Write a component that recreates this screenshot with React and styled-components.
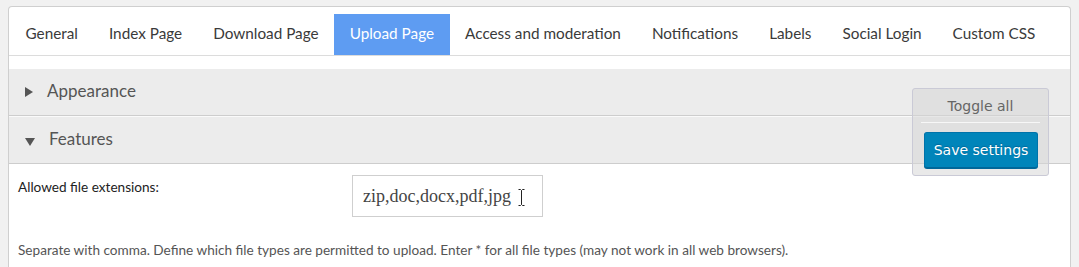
import React from "react";
import styled, { createGlobalStyle } from "styled-components";

const GlobalStyle = createGlobalStyle`
  body {
    margin: 0;
    background: #f1f1f1;
    font-family: Lato, "Open Sans", sans-serif;
  }
`;

const Page = styled.div`
  padding: 6px 8px 0 8px;
  height: 261px;
  overflow: hidden;
`;

const Panel = styled.div`
  position: relative;
  background: #fff;
  border: 1px solid #cfcfcf;
  border-bottom: none;
  border-radius: 4px 4px 0 0;
  height: 100%;
  box-sizing: border-box;
`;

const Tabs = styled.nav`
  display: flex;
  padding: 7px 0 0 1px;
  border-bottom: 1px solid #dcdcdc;
`;

const Tab = styled.div`
  height: 41px;
  box-sizing: border-box;
  display: flex;
  align-items: center;
  padding: 0 15.5px 4px 15.5px;
  font-size: 15.3px;
  color: ${(p) => (p.active ? "#fff" : "#3a3a3a")};
  background: ${(p) => (p.active ? "#5e9cf2" : "transparent")};
  white-space: nowrap;
`;

const Sections = styled.div`
  margin-top: 13px;
`;

const SectionHead = styled.div`
  display: flex;
  align-items: center;
  height: 43px;
  padding: 0 0 3px 16px;
  gap: 14px;
  background: #ececec;
  border-bottom: 1px solid #cdcdcd;
  border-top: ${(p) => (p.first ? "none" : "1px solid #fafafa")};
  font-size: 17px;
  color: #555;
`;

const Arrow = styled.span`
  width: 0;
  height: 0;
  ${(p) =>
    p.open
      ? `border-left: 5px solid transparent;
         border-right: 5px solid transparent;
         border-top: 8px solid #555;
         margin-top: 6px;`
      : `border-top: 5px solid transparent;
         border-bottom: 5px solid transparent;
         border-left: 8px solid #555;
         margin-top: 2px;`}
`;

const Content = styled.div`
  padding: 11px 9px 0 9px;
`;

const Row = styled.div`
  display: flex;
  align-items: flex-start;
`;

const Label = styled.div`
  width: 334px;
  font-size: 13.6px;
  color: #222;
  margin-top: 4px;
`;

const InputWrap = styled.div`
  position: relative;
`;

const TextInput = styled.input`
  width: 191px;
  height: 42px;
  box-sizing: border-box;
  border: 1px solid #cfcfcf;
  padding: 0 10px;
  font-family: "Liberation Serif", "Times New Roman", serif;
  font-size: 18px;
  color: #444;
  background: #fff;
  outline: none;
`;

const Cursor = styled.svg`
  position: absolute;
  left: 166px;
  top: 14px;
`;

const Help = styled.p`
  margin: 25px 0 0 0;
  font-size: 13.6px;
  color: #555;
`;

const ToggleBox = styled.div`
  position: absolute;
  top: 81px;
  right: 21px;
  width: 137px;
  box-sizing: border-box;
  padding: 0 8px 7px 8px;
  background: rgba(215, 215, 215, 0.55);
  border: 1px solid #cacad6;
  border-radius: 3px;
`;

const ToggleTitle = styled.div`
  height: 33px;
  display: flex;
  align-items: center;
  justify-content: center;
  font-family: "DejaVu Sans", Verdana, sans-serif;
  font-size: 14px;
  color: #666;
  border-bottom: 1px solid #f7f7f7;
`;

const SaveButton = styled.button`
  display: block;
  width: 114px;
  height: 36px;
  margin: 9px 0 0 3px;
  padding: 0;
  background: #0085ba;
  border: 1px solid #0073aa;
  border-bottom-color: #006799;
  border-radius: 3px;
  box-shadow: 0 1px 0 #006799;
  color: #fff;
  font-family: "DejaVu Sans", Verdana, sans-serif;
  font-size: 14px;
  text-shadow: 0 -1px 1px #006799;
`;

const tabs = [
  "General",
  "Index Page",
  "Download Page",
  "Upload Page",
  "Access and moderation",
  "Notifications",
  "Labels",
  "Social Login",
  "Custom CSS",
];

export default function App() {
  return (
    <>
      <GlobalStyle />
      <Page>
        <Panel>
          <Tabs>
            {tabs.map((t) => (
              <Tab key={t} active={t === "Upload Page"}>
                {t}
              </Tab>
            ))}
          </Tabs>
          <Sections>
            <SectionHead first>
              <Arrow />
              Appearance
            </SectionHead>
            <SectionHead>
              <Arrow open />
              Features
            </SectionHead>
          </Sections>
          <Content>
            <Row>
              <Label>Allowed file extensions:</Label>
              <InputWrap>
                <TextInput readOnly value="zip,doc,docx,pdf,jpg" />
                <Cursor width="7" height="17" viewBox="0 0 7 17">
                  <path
                    d="M0.5 0.5 H2.5 L3.5 1.5 L4.5 0.5 H6.5 M3.5 1.5 V15.5 M0.5 16.5 H2.5 L3.5 15.5 L4.5 16.5 H6.5"
                    stroke="#222"
                    strokeWidth="1"
                    fill="none"
                  />
                </Cursor>
              </InputWrap>
            </Row>
            <Help>
              Separate with comma. Define which file types are permitted to
              upload. Enter * for all file types (may not work in all web
              browsers).
            </Help>
          </Content>
          <ToggleBox>
            <ToggleTitle>Toggle all</ToggleTitle>
            <SaveButton>Save settings</SaveButton>
          </ToggleBox>
        </Panel>
      </Page>
    </>
  );
}
